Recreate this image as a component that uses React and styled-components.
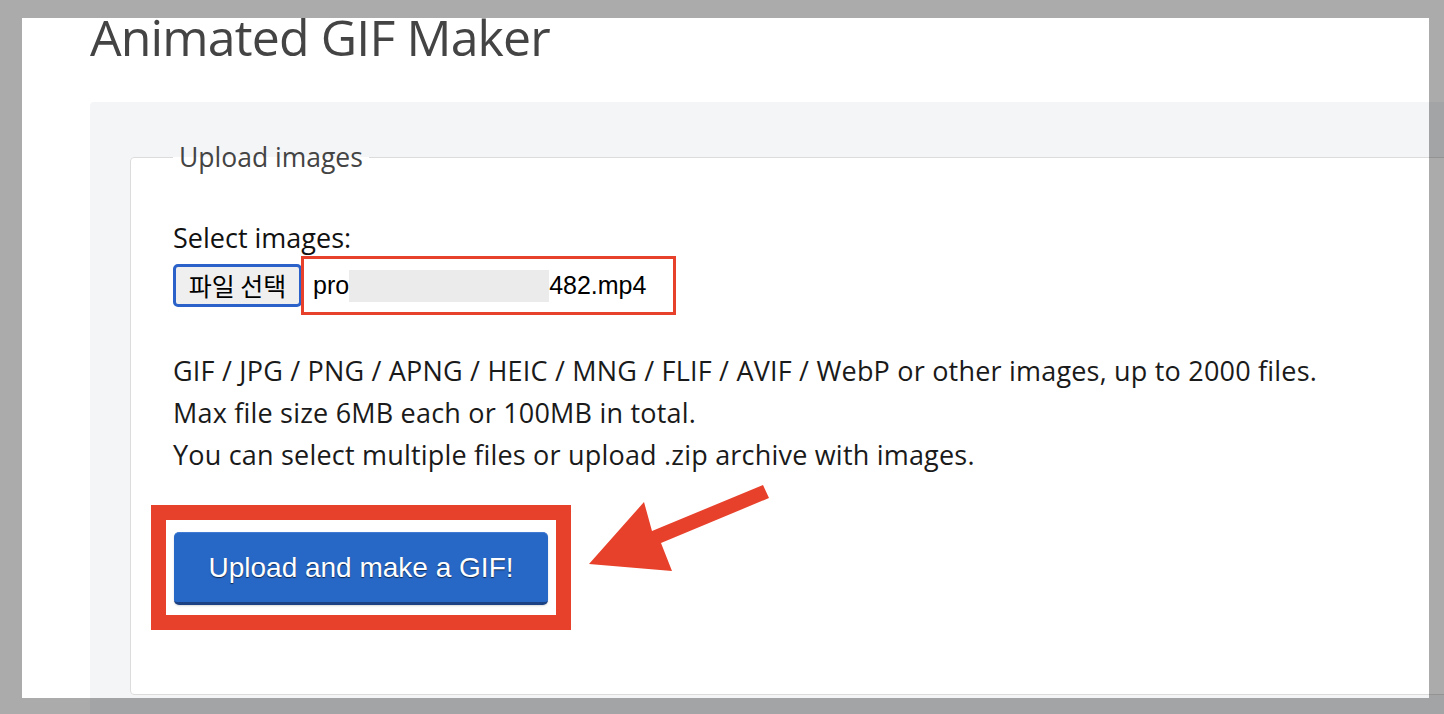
import React from "react";
import styled, { createGlobalStyle } from "styled-components";

const Global = createGlobalStyle`
  html, body { margin: 0; padding: 0; background: #fff; }
  body { font-family: "Open Sans", "Noto Sans", sans-serif; overflow: hidden; }
  * { box-sizing: border-box; }
`;

const Root = styled.div`
  position: relative;
  width: 1444px;
  height: 714px;
  overflow: hidden;
  background: #fff;
`;

const Page = styled.main`
  padding-left: 90px;
  width: 1600px;
`;

const Title = styled.h1`
  margin: 7px 0 35px 0;
  font-family: "Open Sans", "Noto Sans", sans-serif;
  font-weight: 400;
  font-size: 50px;
  line-height: 60px;
  letter-spacing: -0.85px;
  color: #444;
`;

const Panel = styled.section`
  background: #f4f5f7;
  border-radius: 4px 0 0 0;
  padding: 40px 0 40px 40px;
`;

const Fieldset = styled.fieldset`
  margin: 0;
  width: 1400px;
  background: #fff;
  border: 1px solid #dcdcdc;
  border-radius: 4px;
  padding: 50px 20px 64px 42px;
`;

const Legend = styled.legend`
  padding: 0 6px;
  font-size: 26.5px;
  line-height: 30px;
  color: #444;
`;

const Label = styled.div`
  font-size: 27px;
  line-height: 32px;
  color: #111;
`;

const FileRow = styled.div`
  display: flex;
  align-items: center;
  margin-top: 2px;
`;

const FileButton = styled.button`
  width: 129px;
  height: 43px;
  padding: 0;
  border: 3px solid #2a62c9;
  border-radius: 5px;
  background: #efefef;
  font-family: "Noto Sans CJK KR", sans-serif;
  font-size: 25px;
  line-height: 1;
  color: #000;
`;

const Annotation = styled.div`
  border: ${(p) => p.$w}px solid #e8412b;
  background: #fff;
`;

const FileName = styled(Annotation)`
  width: 375px;
  height: 59px;
  margin-left: -1px;
  padding-left: 9px;
  display: flex;
  align-items: center;
  font-family: "Liberation Sans", Arial, sans-serif;
  font-size: 25px;
  color: #000;
`;

const Redacted = styled.span`
  display: inline-block;
  width: 200px;
  height: 32px;
  background: #ebebeb;
`;

const Help = styled.div`
  margin-top: 35px;
  font-size: 27px;
  line-height: 42px;
  letter-spacing: 0.2px;
  color: #1a1a1a;
`;

const ButtonBox = styled(Annotation)`
  display: inline-block;
  margin: 29px 0 0 -22px;
  padding: 12px 8px 10px 8px;
`;

const UploadButton = styled.button`
  width: 374px;
  height: 73px;
  border: none;
  border-top: 1px solid #3f7ad3;
  border-bottom: 3px solid #1d4283;
  border-radius: 5px;
  background: #2767c6;
  box-shadow: 0 1px 2px rgba(0, 0, 0, 0.15);
  font-family: "Liberation Sans", Arial, sans-serif;
  font-size: 28px;
  color: #fff;
  text-shadow: 0 1px 1px rgba(0, 0, 0, 0.6);
  padding: 0;
`;

const Arrow = styled.svg`
  position: absolute;
  left: 580px;
  top: 475px;
  width: 200px;
  height: 105px;
`;

const Frame = styled.div`
  position: absolute;
  inset: 0;
  pointer-events: none;
  border-style: solid;
  border-color: rgba(0, 0, 0, 0.33);
  border-width: 18px 15px 16px 22px;
`;

export default function App() {
  return (
    <Root>
      <Global />
      <Page>
        <Title>Animated GIF Maker</Title>
        <Panel>
          <Fieldset>
            <Legend>Upload images</Legend>
            <Label>Select images:</Label>
            <FileRow>
              <FileButton>파일 선택</FileButton>
              <FileName $w={3}>
                pro<Redacted />482.mp4
              </FileName>
            </FileRow>
            <Help>
              GIF / JPG / PNG / APNG / HEIC / MNG / FLIF / AVIF / WebP or other images, up to 2000 files.
              <br />
              Max file size 6MB each or 100MB in total.
              <br />
              You can select multiple files or upload .zip archive with images.
            </Help>
            <ButtonBox $w={15}>
              <UploadButton>Upload and make a GIF!</UploadButton>
            </ButtonBox>
          </Fieldset>
        </Panel>
      </Page>
      <Arrow viewBox="580 475 200 105">
        <polygon
          points="763,485 652,531 644,502 589,564 672,571 661,543 769,498"
          fill="#e8412b"
        />
      </Arrow>
      <Frame />
    </Root>
  );
}
